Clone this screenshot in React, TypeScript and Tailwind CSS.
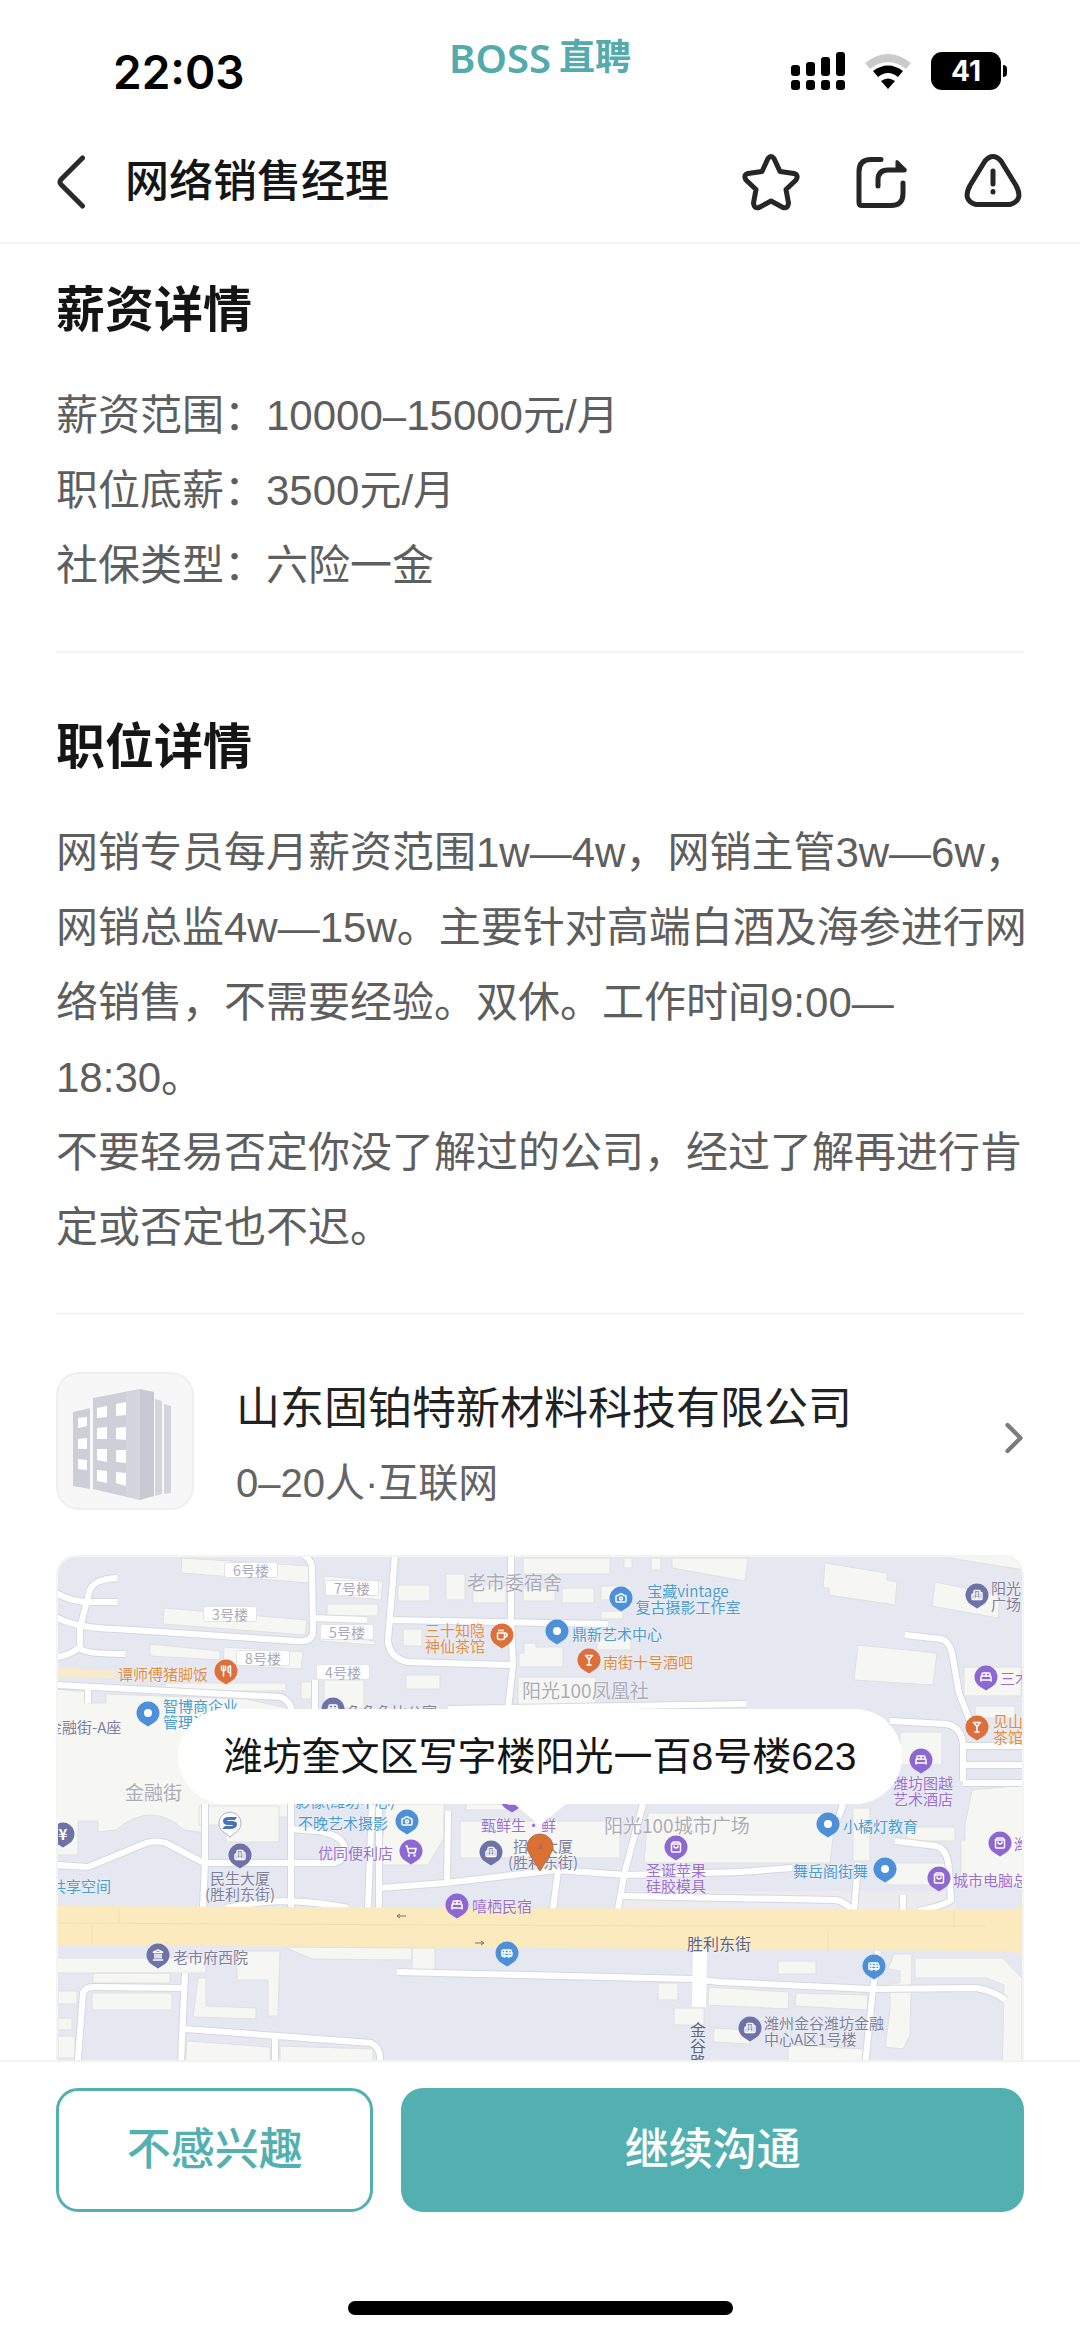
import type { ReactNode } from "react";
import {
  BedDouble,
  Building2,
  Bus,
  Camera,
  ChevronRight,
  Coffee,
  Landmark,
  Martini,
  ShoppingBag,
  ShoppingCart,
  Utensils,
  type LucideIcon,
} from "lucide-react";

const salaryRows = [
  { label: "薪资范围：", value: "10000–15000元/月" },
  { label: "职位底薪：", value: "3500元/月" },
  { label: "社保类型：", value: "六险一金" },
];

const descriptionLines = [
  "网销专员每月薪资范围1w—4w，网销主管3w—6w，",
  "网销总监4w—15w。主要针对高端白酒及海参进行网",
  "络销售，不需要经验。双休。工作时间9:00—",
  "18:30。",
  "不要轻易否定你没了解过的公司，经过了解再进行肯",
  "定或否定也不迟。",
];

type Tone = "blue" | "orange" | "purple" | "slate" | "muted" | "road";

const toneText: Record<Tone, string> = {
  blue: "text-[#4b9ad0] text-[15px]",
  orange: "text-[#e08b45] text-[15px]",
  purple: "text-[#9a6fd0] text-[15px]",
  slate: "text-[#7d7f9c] text-[15px]",
  muted: "text-[#abacb8] text-[19px]",
  road: "text-[#5f6284] text-[16px]",
};

const alignClass = {
  left: "",
  center: "-translate-x-1/2 text-center",
  right: "-translate-x-full text-right",
};

type Place = {
  x: number;
  y: number;
  text: string;
  tone: Tone;
  align?: keyof typeof alignClass;
};

const places: Place[] = [
  { x: 411, y: 27, text: "老市委宿舍", tone: "muted" },
  { x: 466, y: 135, text: "阳光100凤凰社", tone: "muted" },
  { x: 69, y: 237, text: "金融街", tone: "muted" },
  { x: 548, y: 270, text: "阳光100城市广场", tone: "muted" },
  { x: 152, y: 119, text: "谭师傅猪脚饭", tone: "orange", align: "right" },
  { x: 107, y: 159, text: "智博商企业\n管理咨询", tone: "blue" },
  { x: -9, y: 172, text: "金融街-A座", tone: "slate" },
  { x: 291, y: 157, text: "兔兔兔比公寓", tone: "slate" },
  { x: 429, y: 83, text: "三十知隐\n神仙茶馆", tone: "orange", align: "right" },
  { x: 632, y: 44, text: "宝藏vintage\n复古摄影工作室", tone: "blue", align: "center" },
  { x: 516, y: 79, text: "鼎新艺术中心", tone: "blue" },
  { x: 547, y: 107, text: "南街十号酒吧", tone: "orange" },
  { x: 935, y: 41, text: "阳光\n广场", tone: "slate" },
  { x: 944, y: 123, text: "三木", tone: "purple" },
  { x: 937, y: 174, text: "见山\n茶馆", tone: "orange" },
  { x: 867, y: 236, text: "潍坊图越\n艺术酒店", tone: "purple", align: "center" },
  { x: -5, y: 331, text: "共享空间", tone: "blue" },
  { x: 239, y: 246, text: "影像(潍坊中心)", tone: "blue" },
  { x: 242, y: 268, text: "不晚艺术摄影", tone: "blue" },
  { x: 262, y: 298, text: "优同便利店", tone: "purple" },
  { x: 184, y: 331, text: "民生大厦\n(胜利东街)", tone: "slate", align: "center" },
  { x: 117, y: 402, text: "老市府西院", tone: "slate" },
  { x: 425, y: 270, text: "甄鲜生·鲜", tone: "purple" },
  { x: 487, y: 299, text: "招银大厦\n(胜利东街)", tone: "slate", align: "center" },
  { x: 416, y: 351, text: "嘻栖民宿", tone: "purple" },
  { x: 620, y: 323, text: "圣诞苹果\n硅胶模具", tone: "purple", align: "center" },
  { x: 787, y: 271, text: "小橘灯教育", tone: "blue" },
  { x: 737, y: 316, text: "舞岳阁街舞", tone: "blue" },
  { x: 958, y: 289, text: "潍坊", tone: "purple" },
  { x: 897, y: 325, text: "城市电脑总店", tone: "purple" },
  { x: 708, y: 476, text: "潍州金谷潍坊金融\n中心A区1号楼", tone: "slate" },
  { x: 631, y: 388, text: "胜利东街", tone: "road" },
  { x: 642, y: 490, text: "金\n谷\n路", tone: "road", align: "center" },
];

const buildingTags = [
  { x: 195, y: 15, text: "6号楼" },
  { x: 296, y: 33, text: "7号楼" },
  { x: 174, y: 59, text: "3号楼" },
  { x: 291, y: 77, text: "5号楼" },
  { x: 207, y: 103, text: "8号楼" },
  { x: 287, y: 117, text: "4号楼" },
];

const pinFill = {
  blue: "fill-[#4e90d8]",
  orange: "fill-[#dd6f3a]",
  purple: "fill-[#8d67d2]",
  slate: "fill-[#6d73a8]",
};

type MapPin = { x: number; y: number; tone: keyof typeof pinFill; icon?: LucideIcon; mark?: string };

const mapPins: MapPin[] = [
  { x: 170, y: 116, tone: "orange", icon: Utensils },
  { x: 92, y: 158, tone: "blue" },
  { x: 277, y: 154, tone: "slate", icon: BedDouble },
  { x: 446, y: 80, tone: "orange", icon: Coffee },
  { x: 565, y: 43, tone: "blue", icon: Camera },
  { x: 501, y: 76, tone: "blue" },
  { x: 533, y: 105, tone: "orange", icon: Martini },
  { x: 921, y: 40, tone: "slate", icon: Building2 },
  { x: 930, y: 122, tone: "purple", icon: BedDouble },
  { x: 921, y: 172, tone: "orange", icon: Martini },
  { x: 865, y: 205, tone: "purple", icon: BedDouble },
  { x: 7, y: 279, tone: "slate", mark: "¥" },
  { x: 184, y: 300, tone: "slate", icon: Building2 },
  { x: 351, y: 266, tone: "blue", icon: Camera },
  { x: 355, y: 296, tone: "purple", icon: ShoppingCart },
  { x: 102, y: 400, tone: "slate", icon: Landmark },
  { x: 456, y: 244, tone: "purple", icon: ShoppingBag },
  { x: 435, y: 297, tone: "slate", icon: Building2 },
  { x: 401, y: 350, tone: "purple", icon: BedDouble },
  { x: 451, y: 398, tone: "blue", icon: Bus },
  { x: 620, y: 292, tone: "purple", icon: ShoppingBag },
  { x: 772, y: 269, tone: "blue" },
  { x: 829, y: 314, tone: "blue" },
  { x: 944, y: 288, tone: "purple", icon: ShoppingBag },
  { x: 883, y: 323, tone: "purple", icon: ShoppingBag },
  { x: 818, y: 411, tone: "blue", icon: Bus },
  { x: 694, y: 473, tone: "slate", icon: Building2 },
];

const blocks = [
  "M126 3L254 11V28L125 18z M108 53L251 65L249 80L107 69z M268 21L327 26L325 45L268 40z M271 49h51v12h-51z",
  "M264 79L319 86V90L264 86z M94 89L164 96V105L94 101z M168 92L247 97L245 114L167 110z M109 128h121v8h-121z",
  "M268 125h40v28h-40z M245 127h12v17h-12z",
  "M0 134L32 137V148H50V139L190 144L236 154V262H150V278L128 275Q96 245 60 275L42 277V266H22V300H0z",
  "M467 3h87v16h-87z M568 3h8v10h-8z M595 3h10v12h-10z M616 3L692 3L689 26L616 13z",
  "M342 30h32v16h-32z M390 19h19v26h-19z M417 31h33v17h-33z M467 33h32v13h-32z M506 33h32v15h-32z M545 31h30v14h-30z M545 56h22v8h-22z",
  "M347 74h19v17h-19z M350 120h34v14h-34z M468 88H480V92H507V112H463V98H468z M462 122h78v28h-78z M541 83h34v12h-34z",
  "M769 8L831 18V25L841 27L839 50L773 40V33H767z M879 27L944 40L942 63L876 51z M802 90L881 98L877 130L798 125z",
  "M908 112h57v29h-57z M919 151h40v12h-40z M844 177h42v33h-42z M894 3L968 15V0H894z M916 235L968 230V330H905V285H909V270z",
  "M143 251H223V287H170V270H143z M330 249H388V283L372 310H324z M404 266h160v37h-160z M410 249h90v6h-90z",
  "M592 258H780L774 308H588z M797 253h17v53h-17z M851 272h48v14h-48z M831 308h60v22h-60z",
  "M0 403h150v15h-150z M37 418h77v10h-77z M36 438h80v17h-80z M2 436h19v13h-19z M2 463h14v12h-14z M2 481h17v22h-17z",
  "M142 423H150V451L200 453V464L137 462z M181 396H224L222 461H212V425H181z M228 392L356 393V405L256 404z M356 393h23v22h-23z",
  "M131 486L214 492V530H128z M224 491L317 494V530H224z M602 428h20v17h-20z M618 453h30v17h-30z",
  "M653 432L733 437L732 454L652 450z M740 438L812 440L811 455L739 451z M658 473L694 475V489L657 487z M732 490L808 494V530H732z M722 406h38v13h-38z",
  "M838 399H856L854 480L847 494L829 492L834 455V428H844V416L832 414z M859 403H947L966 423V530H946L948 430L930 423H859z",
];

const roads = [
  "M61 23Q36 24 33 38L24 73V91Q18 99 2 102",
  "M0 38Q12 45 28 47H61 M0 62Q20 73 60 74L240 86Q255 88 257 78L256 12Q255 5 248 0 M256 63L311 65 M25 94Q30 99 69 99",
  "M339 0L332 85Q333 103 352 107L456 110 M455 0V66L457 110L452 154 M336 65L552 69",
  "M0 130L225 142Q234 146 236 156 M32 133V148 M259 125V156 M392 154L690 149",
  "M849 80L885 84Q893 86 896 98L903 138L914 166 M834 166L890 169Q906 172 907 190V226 M908 191H968 M908 210H968 M907 228H968",
  "M0 310L32 312L90 288Q100 285 110 288L148 308H278Q292 304 288 290Q284 280 262 276L234 274",
  "M149 249V308L147 353 M235 249V353 M170 353Q200 346 234 346Q270 348 292 353 M316 249L312 353 M323 249V353",
  "M324 333L389 328L500 315L570 320L684 317L736 313 M392 256L391 328 M502 316L497 354 M587 249L569 316L562 354",
  "M567 341L780 345Q790 347 796 356 M787 249L783 262 M802 308L798 356 M839 286L880 291Q892 294 893 315L895 345Q890 350 862 356 M847 340V356",
  "M129 418L127 462L124 530 M20 530L27 438Q29 432 38 432L127 433 M129 474L315 488Q324 492 324 503V530 M219 481V530",
  "M341 417L637 424L664 427L815 434L920 433Q935 435 950 445 M822 396L817 434L807 530",
];

function MapGround() {
  return (
    <svg className="block h-[530px] w-[968px] max-w-none" viewBox="0 0 968 530" fill="none" aria-hidden="true">
      <rect width="968" height="530" fill="#e5e8f1" />
      <path d="M0 112L60 116V123L0 122z" fill="#f8ebcc" />
      <path d="M560 336H900V356H560z" fill="#edebee" />
      <g fill="#f6f6f2" stroke="#e0e0e2">
        {blocks.map((d) => (
          <path key={d} d={d} />
        ))}
      </g>
      <g stroke="#d5d8df" strokeWidth="8">
        {roads.map((d) => (
          <path key={d} d={d} />
        ))}
      </g>
      <g stroke="#ffffff" strokeWidth="6">
        {roads.map((d) => (
          <path key={d} d={d} />
        ))}
      </g>
      <path d="M644 393L643 452" stroke="#ffffff" strokeWidth="14" />
      <path d="M0 351L958 355L968 348V402L958 396L0 390z" fill="#faeabd" />
      <path d="M0 368L380 370L630 371L930 371 M63 354V367 M36 370V388 M772 377V396 M898 356V371" stroke="#f1dfb0" />
      <path d="M350 361H341M344 359L341 361L344 363 M419 388H428M425 386L428 388L425 390" stroke="#77736c" />
    </svg>
  );
}

function PinMarker({ pin }: { pin: MapPin }) {
  const Icon = pin.icon;
  return (
    <div className="absolute h-[26px] w-6 -translate-x-1/2 -translate-y-3" style={{ left: pin.x, top: pin.y }}>
      <svg className="absolute inset-0" viewBox="0 0 24 26" aria-hidden="true">
        <path
          d="M12 0.5a11.5 11.5 0 0 1 5.5 21.6L12 25.5L6.500 22.100A11.5 11.5 0 0 1 12 0.5z"
          className={pinFill[pin.tone]}
        />
        {!Icon && !pin.mark && <circle cx="12" cy="12" r="4" fill="#fff" />}
      </svg>
      {Icon && <Icon className="absolute top-[6px] left-[6px] h-3 w-3 text-white" strokeWidth={3} />}
      {pin.mark && (
        <span className="absolute inset-x-0 top-[2px] text-center text-[15px] leading-5 font-bold text-white">{pin.mark}</span>
      )}
    </div>
  );
}

function AddressMap() {
  return (
    <div className="relative mt-[35px] h-[530px] overflow-hidden rounded-[20px] border-2 border-b-0 border-[#f4f4f5]">
      <div className="absolute -top-[2px] -left-[2px] font-['Noto_Sans_CJK_SC',sans-serif]">
        <MapGround />
        {buildingTags.map((tag) => (
          <span
            key={tag.text}
            className="absolute w-[54px] -translate-x-1/2 -translate-y-1/2 rounded-[3px] border border-[#e3e4ea] bg-white text-center text-[14px] leading-[14px] text-[#a9aabb]"
            style={{ left: tag.x, top: tag.y }}
          >
            {tag.text}
          </span>
        ))}
        {places.map((place) => (
          <span
            key={`${place.x}-${place.y}`}
            className={`absolute -translate-y-1/2 leading-4 whitespace-pre [text-shadow:0_0_2px_#fff] ${toneText[place.tone]} ${alignClass[place.align ?? "left"]}`}
            style={{ left: place.x, top: place.y }}
          >
            {place.text}
          </span>
        ))}
        {mapPins.map((pin) => (
          <PinMarker key={`${pin.x}-${pin.y}`} pin={pin} />
        ))}
        <svg className="absolute top-[256px] left-[162px] h-8 w-6" viewBox="0 0 24 32" aria-hidden="true">
          <path d="M12 26L7 22A11 11 0 1 1 17 22z" fill="#fff" stroke="#a3b3cc" />
          <path d="M5 10Q5 6 11 6H19L17 9H11Q9 9 9 10H15Q20 11 19 14Q18 18 12 18H4L7 15H13Q15 15 15 14H9Q5 13 5 10z" fill="#4a72b4" />
        </svg>
        <svg className="absolute top-[278px] left-[470px] h-10 w-7" viewBox="0 0 28 40" aria-hidden="true">
          <path d="M14 38L3 20Q1 17 1 14A13 13 0 0 1 27 14Q27 17 25 20z" fill="#dc7033" stroke="#a9735a" />
          <path d="M11 16L15 10L17 16z" fill="#b9694a" />
        </svg>
      </div>
      <div className="absolute inset-x-0 top-[152px] flex flex-col items-center">
        <p className="rounded-full bg-white px-[46px] py-5 text-[39px] leading-[55px] whitespace-nowrap text-[#151515]">
          潍坊奎文区写字楼阳光一百8号楼623
        </p>
        <svg className="-mt-px h-[22px] w-[54px]" viewBox="0 0 54 22" aria-hidden="true">
          <path d="M0 0H54L30 20Q27 22 24 20z" fill="#fff" />
        </svg>
      </div>
    </div>
  );
}

function StatusBar() {
  return (
    <div className="grid h-[121px] grid-cols-[1fr_auto_1fr] px-[73px]">
      <time className="mt-10 ml-10 font-[Inter] text-[46px] leading-[64px] font-semibold text-black">22:03</time>
      <div className="mt-7 flex h-[60px] items-center gap-2 leading-[60px] text-[#53abab]">
        <span className="font-['Noto_Sans'] text-[40px] leading-[60px] font-semibold">BOSS</span>
        <span className="text-[36px] leading-[60px] font-bold">直聘</span>
      </div>
      <div className="mt-[52px] flex items-start justify-end gap-[20px]">
        <svg className="h-[38px] w-[54px]" viewBox="0 0 54 38" aria-label="信号">
          <rect x="0" y="13" width="9" height="11" rx="3" />
          <rect x="15" y="10" width="9" height="14" rx="3" />
          <rect x="30" y="5" width="9" height="19" rx="3" />
          <rect x="45" y="0" width="9" height="24" rx="3" />
          <rect x="0" y="28" width="9" height="10" rx="3" />
          <rect x="15" y="28" width="9" height="10" rx="3" />
          <rect x="30" y="28" width="9" height="10" rx="3" />
          <rect x="45" y="28" width="9" height="10" rx="3" />
        </svg>
        <svg className="h-[38px] w-[46px]" viewBox="0 0 46 38" aria-label="无线网络">
          <path d="M0 11Q23-7 46 11L41 17Q23 3 5 17z" fill="#cbcbcb" />
          <path d="M8 19Q23 8 38 19L33 25Q23 17 13 25z" />
          <path d="M16 29Q23 24 30 29L23 37z" />
        </svg>
        <div className="flex items-center" aria-label="电量">
          <div className="h-[38px] w-[70px] rounded-[11px] bg-black text-center font-[Inter] text-[28px] leading-[38px] font-bold text-white">
            41
          </div>
          <div className="ml-[2px] h-3 w-1 rounded-r-full bg-black" />
        </div>
      </div>
    </div>
  );
}

function IconButton({ label, children }: { label: string; children: ReactNode }) {
  return (
    <button type="button" aria-label={label} title={label}>
      <svg
        className="h-[58px] w-[58px]"
        viewBox="0 0 58 58"
        fill="none"
        stroke="#262626"
        strokeWidth="5"
        strokeLinecap="round"
        strokeLinejoin="round"
      >
        {children}
      </svg>
    </button>
  );
}

function NavBar() {
  return (
    <header className="flex h-[123px] items-center border-b-2 border-[#f2f2f2] pr-[58px] pl-[57px]">
      <button type="button" aria-label="返回" title="返回">
        <svg className="h-[54px] w-7" viewBox="0 0 28 54" fill="none" stroke="#2a2a2a" strokeWidth="5" strokeLinecap="round" strokeLinejoin="round">
          <path d="M25.500 3L4 24.500Q2 27 4 29.500L25.500 51" />
        </svg>
      </button>
      <h1 className="ml-10 flex-1 text-[44px] leading-[60px] font-medium text-[#151515]">网络销售经理</h1>
      <div className="flex gap-[53px]">
        <IconButton label="收藏">
          <path d="M26 5.500Q29 1.500 32 5.500L38 18.500L52 20.500Q57 22 54 27L44 36.500L46.500 50Q46 56 41 54.500L29 48L17 54.500Q12 56 11.500 50L14 36.500L4 27Q1 22 6 20.500L20 18.500z" />
        </IconButton>
        <IconButton label="分享">
          <path d="M28 6.500H18Q6 6.500 6 18.500V49.500Q6 52.500 9 52.500H38Q50 52.500 50 40.500V30" />
          <path d="M25 33V27Q25 17 35 17H51" />
          <path d="M44 8.500L52 16.500V17.500H44z" fill="#262626" strokeWidth="3" />
        </IconButton>
        <IconButton label="举报">
          <path d="M21 8Q29-1 37 8L52 32.500Q60 47.500 46 51.500H12Q-2 47.500 6 32.500z" />
          <path d="M29 18V31 M29 38.500V39" />
        </IconButton>
      </div>
    </header>
  );
}

export default function App() {
  return (
    <div className="flex h-screen flex-col overflow-hidden bg-white font-['Liberation_Sans','Noto_Sans_CJK_SC',sans-serif]">
      <StatusBar />
      <NavBar />

      <main className="min-h-0 flex-1 overflow-y-auto px-14 [scrollbar-width:none]">
        <section className="border-b-2 border-[#f5f5f5] pt-9 pb-12">
          <h2 className="text-[49px] leading-[60px] font-bold text-[#151515]">薪资详情</h2>
          <dl className="mt-[38px] text-[42px] leading-[75px] text-[#5e5e5e]">
            {salaryRows.map((row) => (
              <div key={row.label} className="flex">
                <dt>{row.label}</dt>
                <dd>{row.value}</dd>
              </div>
            ))}
          </dl>
        </section>

        <section className="border-b-2 border-[#f5f5f5] pt-16 pb-12">
          <h2 className="text-[49px] leading-[60px] font-bold text-[#151515]">职位详情</h2>
          <p className="mt-[38px] text-[42px] leading-[75px] text-[#5e5e5e]">
            {descriptionLines.map((line) => (
              <span key={line} className="block whitespace-nowrap">
                {line}
              </span>
            ))}
          </p>
        </section>

        <a href="#company" className="mt-[57px] flex items-start">
          <svg className="h-[138px] w-[138px]" viewBox="0 0 138 138" aria-hidden="true">
            <rect x="1" y="1" width="136" height="136" rx="22" fill="#f7f7f8" stroke="#efefef" strokeWidth="2" />
            <path d="M17 40L34 36V117L17 114z" fill="#ceced8" />
            <path d="M37 26L84 17V128L37 117z" fill="#cfcfd9" />
            <path d="M70 20L84 17V128L70 124z" fill="#d5d5dd" />
            <path d="M84 17L98 20V124L84 128z" fill="#c9c9d4" />
            <path d="M99 27L106 29V122L99 124z M108 32L115 34V121L108 122z" fill="#d4d4db" />
            <path
              d="M22 46L31 45V54L22 56z M22 67L31 66V77L22 77z M22 87L31 88V98L22 97z M41 36L51 34V45L41 46z M41 56L51 55V67L41 67z M41 77L51 77V90L41 88z M41 98L51 99V111L41 109z M60 32L70 30V43L60 44z M60 56L70 55V68L60 67z M60 78L70 78V91L60 90z M60 100L70 101V114L60 111z"
              fill="#fff"
            />
          </svg>
          <div className="ml-[42px] flex-1">
            <h3 className="text-[44px] leading-[74px] whitespace-nowrap text-[#222222]">山东固铂特新材料科技有限公司</h3>
            <p className="text-[40px] leading-[74px] text-[#646464]">0–20人·互联网</p>
          </div>
          <ChevronRight className="mt-10 -mr-4 h-[52px] w-[52px] text-[#7c7c7c]" strokeWidth={2} />
        </a>

        <AddressMap />
      </main>

      <footer className="border-t-2 border-[#f2f2f2] bg-white px-14 pt-[26px] pb-[22px]">
        <div className="flex gap-7 text-[44px] leading-[60px] font-medium">
          <button type="button" className="h-[124px] flex-1 rounded-[22px] border-[3px] border-[#53b0b1] text-[#53b0b1]">
            不感兴趣
          </button>
          <button type="button" className="h-[124px] flex-2 rounded-[22px] bg-[#53b0b1] text-white">
            继续沟通
          </button>
        </div>
        <div className="mx-auto mt-[89px] h-[14px] w-[385px] rounded-full bg-black" />
      </footer>
    </div>
  );
}
